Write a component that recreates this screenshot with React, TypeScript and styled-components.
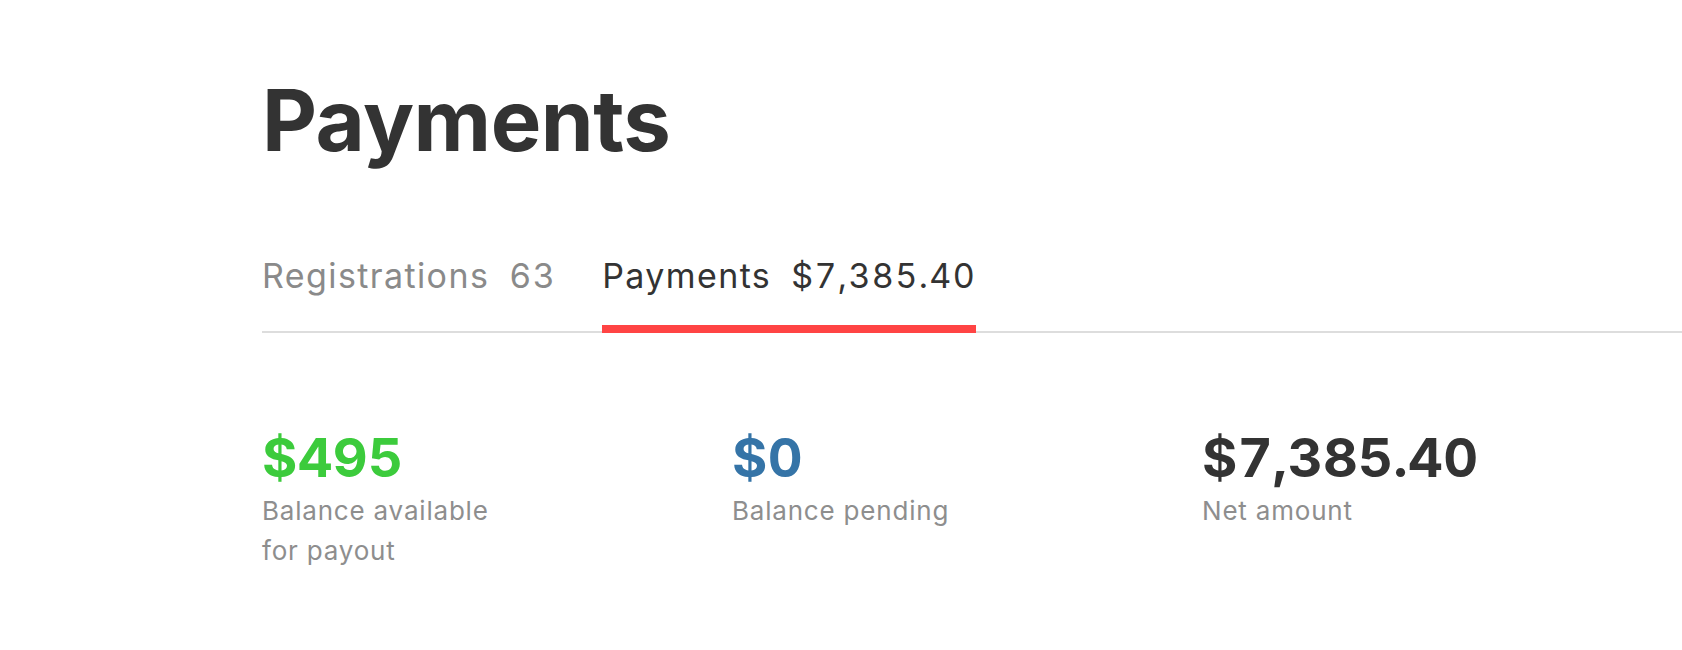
import styled, { createGlobalStyle } from 'styled-components'

const GlobalStyle = createGlobalStyle`
  html, body {
    margin: 0;
    padding: 0;
    background: #FFFFFF;
  }
  body {
    font-family: Inter, "Noto Sans", "Liberation Sans", sans-serif;
    color: #333333;
  }
`

const Page = styled.main`
  display: flex;
  flex-direction: column;
  padding: 78px 0 0 262px;
`

const Title = styled.h1`
  margin: 0;
  font-size: 85px;
  line-height: 1;
  font-weight: 700;
  color: #333333;
  letter-spacing: -0.5px;
`

const TabBar = styled.nav`
  display: flex;
  flex-direction: row;
  gap: 46px;
  margin-top: 93px;
  border-bottom: 2px solid #DDDDDD;
`

const Tab = styled.a<{ $active?: boolean }>`
  display: flex;
  gap: 20px;
  padding-bottom: 29px;
  margin-bottom: -2px;
  font-size: 34px;
  line-height: 40px;
  font-weight: 400;
  letter-spacing: 1.4px;
  font-variant-numeric: tabular-nums;
  text-decoration: none;
  color: ${p => (p.$active ? '#333333' : '#8A8A8A')};
  border-bottom: 8px solid ${p => (p.$active ? '#FF4444' : 'transparent')};
  cursor: pointer;
`

const Stats = styled.section`
  display: grid;
  grid-template-columns: repeat(3, 470px);
  margin-top: 95px;
`

const Stat = styled.figure`
  display: flex;
  flex-direction: column;
  margin: 0;
`

const Amount = styled.span<{ $color: string }>`
  font-size: 54px;
  line-height: 60px;
  font-weight: 700;
  letter-spacing: 0.3px;
  font-variant-numeric: tabular-nums;
  color: ${p => p.$color};
`

const Label = styled.span`
  margin-top: 3px;
  max-width: 250px;
  font-size: 26px;
  line-height: 40px;
  color: #8E8E8E;
  letter-spacing: 0.8px;
`

const tabs = [
  { name: 'Registrations', count: '63', active: false },
  { name: 'Payments', count: '$7,385.40', active: true },
]

const stats = [
  { amount: '$495', label: 'Balance available for payout', color: '#3CCB3C' },
  { amount: '$0', label: 'Balance pending', color: '#3574A7' },
  { amount: '$7,385.40', label: 'Net amount', color: '#333333' },
]

const App = () => {
  return (
    <>
      <GlobalStyle />
      <Page>
        <Title>Payments</Title>
        <TabBar>
          {tabs.map(tab => (
            <Tab key={tab.name} $active={tab.active}>
              <span>{tab.name}</span>
              <span>{tab.count}</span>
            </Tab>
          ))}
        </TabBar>
        <Stats>
          {stats.map(stat => (
            <Stat key={stat.label}>
              <Amount $color={stat.color}>{stat.amount}</Amount>
              <Label>{stat.label}</Label>
            </Stat>
          ))}
        </Stats>
      </Page>
    </>
  )
}

export default App
